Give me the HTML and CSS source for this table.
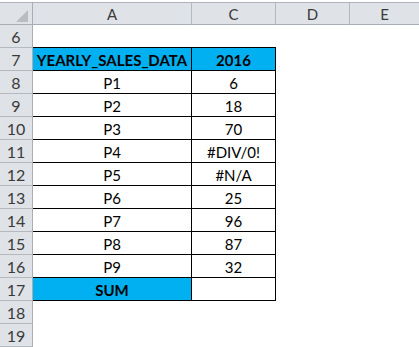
FILE: index.html
```html
<!DOCTYPE html>
<html>
<head>
<meta charset="utf-8">
<link rel="stylesheet" href="styles.css">
</head>
<body>
<div class="sheet">
  <div class="hd corner"><span class="tri"></span></div>
  <div class="hd col">A</div>
  <div class="hd col">C</div>
  <div class="hd col">D</div>
  <div class="hd col last">E</div>

  <div class="rh">6</div><div class="c tb-top"></div><div class="c tb-top"></div><div class="c"></div><div class="c"></div>
  <div class="rh">7</div><div class="c t blue b">YEARLY_SALES_DATA</div><div class="c t blue b">2016</div><div class="c"></div><div class="c"></div>
  <div class="rh">8</div><div class="c t">P1</div><div class="c t">6</div><div class="c"></div><div class="c"></div>
  <div class="rh">9</div><div class="c t">P2</div><div class="c t">18</div><div class="c"></div><div class="c"></div>
  <div class="rh">10</div><div class="c t">P3</div><div class="c t">70</div><div class="c"></div><div class="c"></div>
  <div class="rh">11</div><div class="c t">P4</div><div class="c t">#DIV/0!</div><div class="c"></div><div class="c"></div>
  <div class="rh">12</div><div class="c t">P5</div><div class="c t">#N/A</div><div class="c"></div><div class="c"></div>
  <div class="rh">13</div><div class="c t">P6</div><div class="c t">25</div><div class="c"></div><div class="c"></div>
  <div class="rh">14</div><div class="c t">P7</div><div class="c t">96</div><div class="c"></div><div class="c"></div>
  <div class="rh">15</div><div class="c t">P8</div><div class="c t">87</div><div class="c"></div><div class="c"></div>
  <div class="rh">16</div><div class="c t">P9</div><div class="c t">32</div><div class="c"></div><div class="c"></div>
  <div class="rh">17</div><div class="c t blue b">SUM</div><div class="c t"></div><div class="c"></div><div class="c"></div>
  <div class="rh">18</div><div class="c"></div><div class="c"></div><div class="c"></div><div class="c"></div>
  <div class="rh">19</div><div class="c"></div><div class="c"></div><div class="c"></div><div class="c"></div>
</div>
</body>
</html>
```
FILE: styles.css
```css
html, body {
  margin: 0;
  padding: 0;
  background: #ffffff;
}
.sheet {
  display: grid;
  grid-template-columns: 33px 159px 84px 74px 1fr;
  grid-template-rows: 25px repeat(14, 23px);
  width: 419px;
  height: 347px;
  overflow: hidden;
  font-family: Lato, "Liberation Sans", sans-serif;
  font-size: 15px;
  color: #000;
}
.hd {
  box-sizing: border-box;
  background: #dfe2e6;
  border-top: 1px solid #aeb3b9;
  border-bottom: 1px solid #a9aeb4;
  border-right: 1px solid #b4b9bf;
  margin-top: 2px;
  height: 23px;
  display: flex;
  align-items: center;
  justify-content: center;
  color: #3a3a3a;
  font-size: 15px;
}
.hd.last { border-right: none; }
.corner {
  position: relative;
  border-right: 1px solid #a9aeb4;
}
.tri {
  position: absolute;
  right: 4px;
  bottom: 2px;
  width: 0;
  height: 0;
  border-left: 12px solid transparent;
  border-bottom: 12px solid #b9bdc2;
}
.rh {
  box-sizing: border-box;
  background: #dfe2e6;
  border-bottom: 1px solid #b4b9bf;
  border-right: 1px solid #a9aeb4;
  display: flex;
  align-items: center;
  justify-content: center;
  color: #3a3a3a;
  font-size: 16px;
}
.c {
  box-sizing: border-box;
  display: flex;
  align-items: center;
  justify-content: center;
  padding-top: 1px;
}
.tb-top {
  border-bottom: 1px solid #000;
}
.t {
  border-right: 1px solid #000;
  border-bottom: 1px solid #000;
}
.blue { background: #00b0f0; }
.b { font-weight: 700; }
```
